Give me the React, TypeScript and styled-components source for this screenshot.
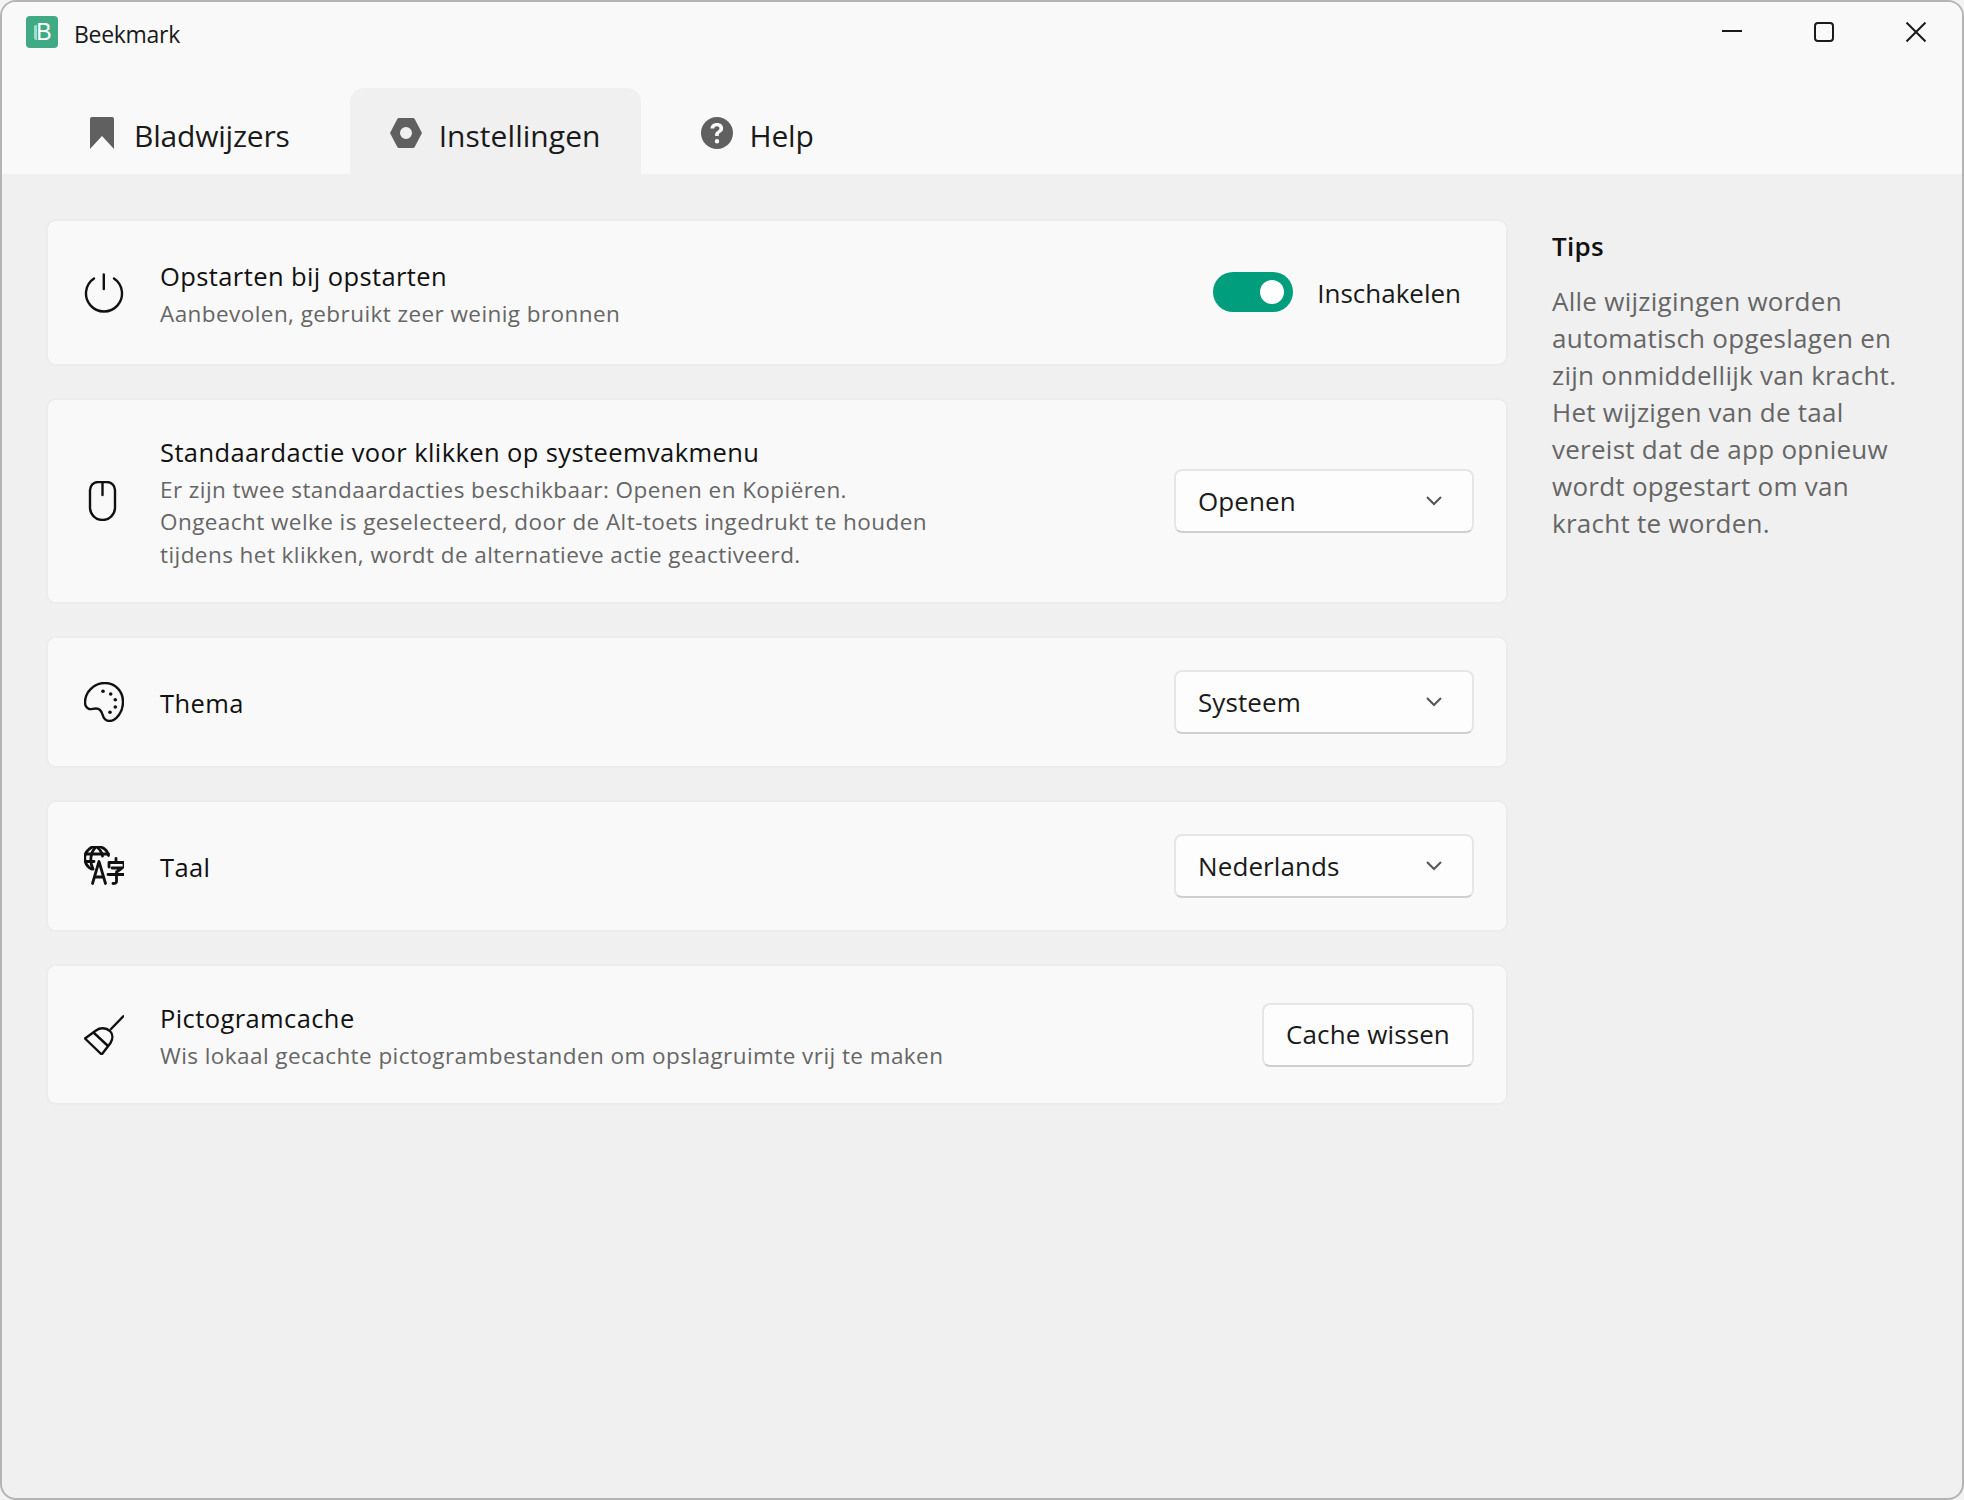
import React from 'react';
import styled, { createGlobalStyle } from 'styled-components';

const GlobalStyle = createGlobalStyle`
  html, body {
    margin: 0;
    padding: 0;
    background: #f3f3f3;
  }
  * {
    box-sizing: border-box;
  }
`;

const Window = styled.div`
  width: 1964px;
  height: 1500px;
  display: flex;
  flex-direction: column;
  background: #f0f0f0;
  border: 2px solid #b4b4b4;
  border-radius: 16px;
  overflow: hidden;
  font-family: "Open Sans", "Noto Sans", sans-serif;
  color: #1a1a1a;
`;

const Header = styled.header`
  height: 172px;
  flex-shrink: 0;
  display: flex;
  flex-direction: column;
  background: #f9f9f9;
`;

const TitleBar = styled.div`
  height: 86px;
  flex-shrink: 0;
  display: flex;
  align-items: flex-start;
  padding: 14px 36px 0 24px;
`;

const Logo = styled.div`
  width: 32px;
  height: 32px;
  position: relative;
  display: flex;
  align-items: center;
  justify-content: center;
  padding-left: 4px;
  border-radius: 4px;
  background: #3faa84;
  color: #fff;
  font-size: 23px;
  font-family: "Liberation Sans", sans-serif;
  line-height: 1;
`;

const LogoBar = styled.span`
  position: absolute;
  left: 8px;
  top: 9px;
  width: 3px;
  height: 15px;
  border-radius: 2px 0 0 2px;
  background: #a5dcc8;
`;

const AppName = styled.div`
  margin-left: 16px;
  font-size: 23px;
  line-height: 36px;
  letter-spacing: -0.3px;
`;

const WindowControls = styled.div`
  margin-left: auto;
  display: flex;
  gap: 72px;
  padding-top: 6px;
`;

const ControlIcon = styled.svg`
  display: block;
  width: 20px;
  height: 20px;
  fill: none;
  stroke: #1a1a1a;
  stroke-width: 2;
`;

const TabList = styled.nav`
  display: flex;
  gap: 20px;
  padding-left: 45px;
`;

const Tab = styled.div<{ $active?: boolean }>`
  height: 86px;
  display: flex;
  align-items: center;
  gap: 17px;
  padding: 9px 40px 0;
  border-radius: 14px 14px 0 0;
  background: ${(p) => (p.$active ? '#f0f0f0' : 'transparent')};
  font-size: 30px;
  letter-spacing: ${(p) => (p.$active ? '0.05px' : '-0.2px')};
`;

const TabIcon = styled.svg`
  display: block;
  flex-shrink: 0;
  margin-top: -5px;
  fill: #606060;
`;

const Body = styled.div`
  flex: 1;
  display: flex;
  gap: 44px;
  padding: 45px 0 0 44px;
`;

const Settings = styled.main`
  width: 1462px;
  flex-shrink: 0;
  display: flex;
  flex-direction: column;
  gap: 32px;
`;

const Card = styled.section<{ $height: number }>`
  height: ${(p) => p.$height}px;
  display: flex;
  align-items: center;
  padding: 0 32px 0 36px;
  border: 2px solid #ececec;
  border-radius: 10px;
  background: #f9f9f9;
`;

const CardIcon = styled.svg`
  display: block;
  width: 40px;
  height: 40px;
  flex-shrink: 0;
  margin-right: 36px;
  fill: none;
  stroke: #111;
  stroke-width: 2.4;
  stroke-linecap: round;
  stroke-linejoin: round;
`;

const CardText = styled.div`
  flex: 1;
  min-width: 0;
  padding-top: 1px;
`;

const CardTitle = styled.div`
  font-size: 25.5px;
  line-height: 34px;
  letter-spacing: 0.4px;
  color: #111;

  &:not(:last-child) {
    margin-top: 3px;
  }
`;

const CardDescription = styled.div`
  margin-top: 5px;
  font-size: 22.5px;
  line-height: 32.4px;
  letter-spacing: 0.43px;
  color: #666;
`;

const ToggleGroup = styled.div`
  display: flex;
  align-items: center;
  gap: 24px;
  padding-right: 13px;
`;

const Toggle = styled.div`
  width: 80px;
  height: 40px;
  position: relative;
  margin-top: -1px;
  border-radius: 20px;
  background: #009e7c;
`;

const ToggleKnob = styled.span`
  position: absolute;
  right: 9px;
  top: 8px;
  width: 24px;
  height: 24px;
  border-radius: 50%;
  background: #fff;
`;

const ToggleLabel = styled.span`
  font-size: 26px;
`;

const Select = styled.div`
  width: 300px;
  height: 64px;
  display: flex;
  align-items: center;
  justify-content: space-between;
  padding: 0 29px 1px 22px;
  border: 2px solid #e6e6e6;
  border-bottom-color: #cfcfcf;
  border-radius: 8px;
  background: #fdfdfd;
  font-size: 26px;
  letter-spacing: 0.1px;
`;

const Chevron = styled.svg`
  display: block;
  width: 18px;
  height: 12px;
  fill: none;
  stroke: #555;
  stroke-width: 2;
`;

const Button = styled.button`
  height: 64px;
  width: 212px;
  padding: 0 0 2px;
  border: 2px solid #e6e6e6;
  border-bottom-color: #cfcfcf;
  border-radius: 8px;
  background: #fdfdfd;
  color: #1a1a1a;
  font-family: inherit;
  font-size: 26px;
  letter-spacing: 0.1px;
`;

const Sidebar = styled.aside`
  width: 350px;
  padding-top: 9px;
`;

const SidebarTitle = styled.div`
  font-size: 26px;
  font-weight: 600;
  line-height: 36px;
  letter-spacing: 0.3px;
  color: #111;
`;

const SidebarText = styled.div`
  margin-top: 19px;
  font-size: 26px;
  line-height: 37px;
  letter-spacing: 0.26px;
  color: #666;
`;

const selectChevron = (
  <Chevron viewBox="0 0 18 12">
    <path d="M2 2l7 7 7-7" />
  </Chevron>
);

export default function App() {
  return (
    <>
      <GlobalStyle />
      <Window>
        <Header>
          <TitleBar>
            <Logo>
              <LogoBar />B
            </Logo>
            <AppName>Beekmark</AppName>
            <WindowControls>
              <ControlIcon viewBox="0 0 20 20">
                <path d="M0 9h20" />
              </ControlIcon>
              <ControlIcon viewBox="0 0 20 20">
                <rect x="1" y="1" width="18" height="18" rx="3" />
              </ControlIcon>
              <ControlIcon viewBox="0 0 20 20">
                <path d="M.5.5l19 19M19.5.5l-19 19" />
              </ControlIcon>
            </WindowControls>
          </TitleBar>
          <TabList>
            <Tab>
              <TabIcon width="30" height="32" viewBox="-3 0 30 32">
                <path d="M2 0h20a2 2 0 0 1 2 2v30L12 19 0 32V2a2 2 0 0 1 2-2z" />
              </TabIcon>
              Bladwijzers
            </Tab>
            <Tab $active>
              <TabIcon width="32" height="30" viewBox="0 0 32 30">
                <path
                  fillRule="evenodd"
                  d="M9 0h14a2 2 0 0 1 1.700 1L32 15l-7.300 14a2 2 0 0 1-1.700 1H9a2 2 0 0 1-1.700-1L0 15 7.300 1A2 2 0 0 1 9 0zm7 9a6 6 0 1 0 0 12 6 6 0 0 0 0-12z"
                />
              </TabIcon>
              Instellingen
            </Tab>
            <Tab>
              <TabIcon width="32" height="32" viewBox="0 0 32 32">
                <path
                  fillRule="evenodd"
                  d="M16 0a16 16 0 1 1 0 32 16 16 0 0 1 0-32zm0 22a2.200 2.200 0 1 0 0 4.400 2.200 2.200 0 0 0 0-4.400zM16 6c-3.800 0-6.300 2.200-6.500 5.500h3.700c.2-1.400 1.200-2.300 2.700-2.300s2.500.8 2.500 2.100c0 1.100-.5 1.700-1.900 2.600-1.700 1.100-2.400 2.200-2.400 4.100v1h3.600v-.7c0-1.200.4-1.700 1.900-2.700 1.700-1.100 2.600-2.400 2.600-4.300C22.200 8.200 19.800 6 16 6z"
                />
              </TabIcon>
              Help
            </Tab>
          </TabList>
        </Header>
        <Body>
          <Settings>
            <Card $height={147}>
              <CardIcon viewBox="0 0 40 40">
                <path d="M19.800 1.500V16" />
                <path d="M10 5.500a18 18 0 1 0 20 0" />
              </CardIcon>
              <CardText>
                <CardTitle>Opstarten bij opstarten</CardTitle>
                <CardDescription>Aanbevolen, gebruikt zeer weinig bronnen</CardDescription>
              </CardText>
              <ToggleGroup>
                <Toggle>
                  <ToggleKnob />
                </Toggle>
                <ToggleLabel>Inschakelen</ToggleLabel>
              </ToggleGroup>
            </Card>
            <Card $height={206}>
              <CardIcon viewBox="0 0 40 40">
                <path d="M6 9a8 8 0 0 1 8-8h9a8 8 0 0 1 8 8v17.500a12.500 12.500 0 0 1-25 0z" />
                <path d="M18.500 1v13" />
              </CardIcon>
              <CardText>
                <CardTitle>Standaardactie voor klikken op systeemvakmenu</CardTitle>
                <CardDescription>
                  Er zijn twee standaardacties beschikbaar: Openen en Kopiëren.
                  <br />
                  Ongeacht welke is geselecteerd, door de Alt-toets ingedrukt te houden
                  <br />
                  tijdens het klikken, wordt de alternatieve actie geactiveerd.
                </CardDescription>
              </CardText>
              <Select>
                Openen
                {selectChevron}
              </Select>
            </Card>
            <Card $height={132}>
              <CardIcon viewBox="0 0 40 40">
                <path d="M21 1c10 0 18 8 18 19 0 10-7 19-13.500 19-4.500 0-6-3-7-6.500-1-3.500-3-6-6.500-6-3 0-4.500 1-7 .5C3 26 1 23.500 1 20.500 1 10 10 1 21 1z" />
                <g fill="#111" stroke="none">
                  <circle cx="19" cy="9.300" r="1.800" />
                  <circle cx="26.700" cy="12" r="1.800" />
                  <circle cx="31.300" cy="17.700" r="1.800" />
                  <circle cx="31.300" cy="25" r="1.800" />
                  <circle cx="26" cy="30.300" r="1.800" />
                </g>
              </CardIcon>
              <CardText>
                <CardTitle>Thema</CardTitle>
              </CardText>
              <Select>
                Systeem
                {selectChevron}
              </Select>
            </Card>
            <Card $height={132}>
              <CardIcon viewBox="0 0 40 40">
                <g strokeWidth="2.800">
                  <path d="M7.500 23A12 12 0 1 1 24.500 9.500" />
                  <path d="M12.500.5C6 6 5.500 16 9 23M12.500.5c3.500 3 5.500 6 6 9.500" />
                  <path d="M1.500 8h23M1 15.500h9" />
                  <path d="M8.500 37.500L15 15.500l6.500 22M10.800 31h8.400" />
                  <path d="M32 12.500v3.500M25 21v-4.500h15V21M28 22h10l-5.500 4M24 28.500h16M32.500 26v9.500c0 1.500-1 2-3.500 2" />
                </g>
              </CardIcon>
              <CardText>
                <CardTitle>Taal</CardTitle>
              </CardText>
              <Select>
                Nederlands
                {selectChevron}
              </Select>
            </Card>
            <Card $height={141}>
              <CardIcon viewBox="0 0 40 40">
                <path d="M39.300 1.300L27 14" />
                <path d="M1 23.500L12 15.500C16 12.500 22 12.500 26 16 29 19 29 24 26.500 28L17.700 39.500z" />
                <path d="M9.500 17.500L24 31" />
              </CardIcon>
              <CardText>
                <CardTitle>Pictogramcache</CardTitle>
                <CardDescription>Wis lokaal gecachte pictogrambestanden om opslagruimte vrij te maken</CardDescription>
              </CardText>
              <Button>Cache wissen</Button>
            </Card>
          </Settings>
          <Sidebar>
            <SidebarTitle>Tips</SidebarTitle>
            <SidebarText>
              Alle wijzigingen worden automatisch opgeslagen en zijn onmiddellijk van kracht. Het wijzigen van de taal vereist dat de app opnieuw wordt opgestart om van kracht te worden.
            </SidebarText>
          </Sidebar>
        </Body>
      </Window>
    </>
  );
}
